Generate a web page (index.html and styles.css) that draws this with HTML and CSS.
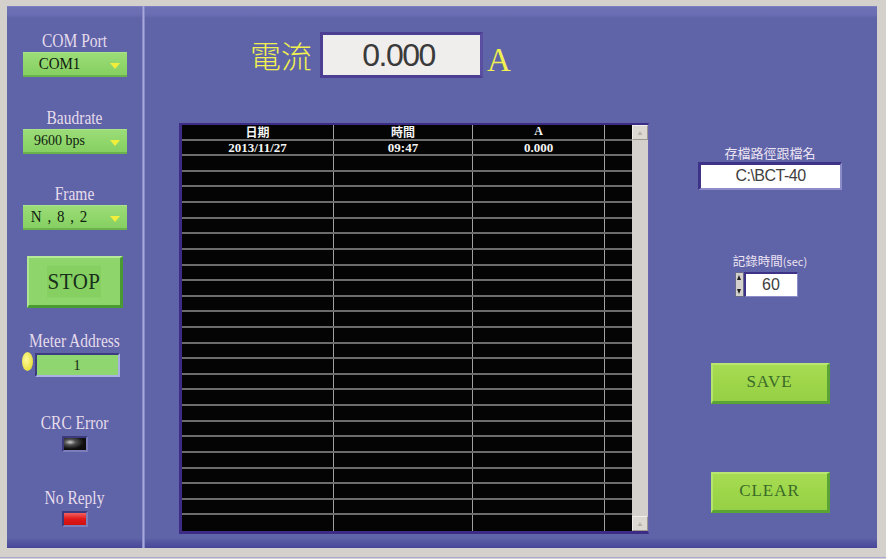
FILE: index.html
```html
<!DOCTYPE html>
<html>
<head>
<meta charset="utf-8">
<link rel="stylesheet" href="styles.css">
</head>
<body>
<div class="app">
  <div class="left panel">
    <div class="lbl l-com">COM Port</div>
    <div class="drop"><span class="drop-text">COM1</span><span class="arrow"></span></div>
    <div class="lbl l-baud">Baudrate</div>
    <div class="drop"><span class="drop-text small">9600 bps</span><span class="arrow"></span></div>
    <div class="lbl l-frame">Frame</div>
    <div class="drop"><span class="drop-text wide">N , 8 , 2</span><span class="arrow"></span></div>
    <div class="stop"><span>STOP</span></div>
    <div class="lbl l-meter">Meter Address</div>
    <div class="meter">
      <div class="knob"></div>
      <div class="meter-field">1</div>
    </div>
    <div class="lbl l-crc">CRC Error</div>
    <div class="led led-off"></div>
    <div class="lbl l-noreply">No Reply</div>
    <div class="led led-red"></div>
  </div>
  <div class="divider"></div>
  <div class="main panel">
    <div class="reading">
      <div class="cur-label">電流</div>
      <div class="cur-box">0.000</div>
      <div class="cur-unit">A</div>
    </div>
    <div class="content">
      <div class="table">
        <div class="grid">
          <div class="row head"><div class="c">日期</div><div class="c">時間</div><div class="c">A</div><div class="c"></div></div>
          <div class="row"><div class="c">2013/11/27</div><div class="c">09:47</div><div class="c">0.000</div><div class="c"></div></div>
          <div class="row"><div class="c"></div><div class="c"></div><div class="c"></div><div class="c"></div></div>
          <div class="row"><div class="c"></div><div class="c"></div><div class="c"></div><div class="c"></div></div>
          <div class="row"><div class="c"></div><div class="c"></div><div class="c"></div><div class="c"></div></div>
          <div class="row"><div class="c"></div><div class="c"></div><div class="c"></div><div class="c"></div></div>
          <div class="row"><div class="c"></div><div class="c"></div><div class="c"></div><div class="c"></div></div>
          <div class="row"><div class="c"></div><div class="c"></div><div class="c"></div><div class="c"></div></div>
          <div class="row"><div class="c"></div><div class="c"></div><div class="c"></div><div class="c"></div></div>
          <div class="row"><div class="c"></div><div class="c"></div><div class="c"></div><div class="c"></div></div>
          <div class="row"><div class="c"></div><div class="c"></div><div class="c"></div><div class="c"></div></div>
          <div class="row"><div class="c"></div><div class="c"></div><div class="c"></div><div class="c"></div></div>
          <div class="row"><div class="c"></div><div class="c"></div><div class="c"></div><div class="c"></div></div>
          <div class="row"><div class="c"></div><div class="c"></div><div class="c"></div><div class="c"></div></div>
          <div class="row"><div class="c"></div><div class="c"></div><div class="c"></div><div class="c"></div></div>
          <div class="row"><div class="c"></div><div class="c"></div><div class="c"></div><div class="c"></div></div>
          <div class="row"><div class="c"></div><div class="c"></div><div class="c"></div><div class="c"></div></div>
          <div class="row"><div class="c"></div><div class="c"></div><div class="c"></div><div class="c"></div></div>
          <div class="row"><div class="c"></div><div class="c"></div><div class="c"></div><div class="c"></div></div>
          <div class="row"><div class="c"></div><div class="c"></div><div class="c"></div><div class="c"></div></div>
          <div class="row"><div class="c"></div><div class="c"></div><div class="c"></div><div class="c"></div></div>
          <div class="row"><div class="c"></div><div class="c"></div><div class="c"></div><div class="c"></div></div>
          <div class="row"><div class="c"></div><div class="c"></div><div class="c"></div><div class="c"></div></div>
          <div class="row"><div class="c"></div><div class="c"></div><div class="c"></div><div class="c"></div></div>
          <div class="row"><div class="c"></div><div class="c"></div><div class="c"></div><div class="c"></div></div>
          <div class="row last"><div class="c"></div><div class="c"></div><div class="c"></div><div class="c"></div></div>
        </div>
        <div class="scroll">
          <div class="sbtn"><svg width="6" height="6" viewBox="0 0 6 6"><path d="M3 1 L5.5 5 L0.5 5 Z" fill="#b8b4a8"/></svg></div>
          <div class="strack"></div>
          <div class="sbtn"><svg width="6" height="6" viewBox="0 0 6 6"><path d="M3 1 L5.5 5 L0.5 5 Z" fill="#b8b4a8"/></svg></div>
        </div>
      </div>
      <div class="side">
        <div class="side-lbl l-path">存檔路徑跟檔名</div>
        <div class="path-field">C:\BCT-40</div>
        <div class="side-lbl l-rec">記錄時間<span class="sec">(sec)</span></div>
        <div class="num">
          <div class="spin"><span class="tri up"></span><span class="tri down"></span></div>
          <div class="num-field">60</div>
        </div>
        <div class="gbtn save">SAVE</div>
        <div class="gbtn clear">CLEAR</div>
      </div>
    </div>
  </div>
</div>
<div class="bottom-line"></div>
</body>
</html>
```

FILE: styles.css
```css
html, body {
  margin: 0;
  padding: 0;
}
body {
  width: 886px;
  height: 559px;
  background: #d4d0cc;
  overflow: hidden;
  font-family: "Liberation Serif", "Times New Roman", serif;
}
.app {
  display: flex;
  padding: 6px 9px 0 7px;
  height: 542px;
}
.panel {
  background: linear-gradient(to bottom, #8a8ccc 0px, #6e71b4 1px, #6a6db2 9px, #5f63a8 12px, #5f63a8 532px, #5456a0 536px, #48469a 542px);
  height: 542px;
  box-sizing: border-box;
}
.left {
  width: 135px;
  display: flex;
  flex-direction: column;
  align-items: center;
}
.divider {
  width: 3px;
  height: 542px;
  background: linear-gradient(to right, #7c7ec0, #a8a8dc, #7678bc);
}
.main {
  flex: 1;
  display: flex;
  flex-direction: column;
  padding: 26px 0 0 34px;
}

/* left panel */
.lbl {
  color: #e6dcec;
  font-size: 15.5px;
  line-height: 16px;
  height: 16px;
  white-space: nowrap;
  transform: scaleY(1.15);
}
.l-com { margin-top: 27px; }
.l-baud { margin-top: 33px; }
.l-frame { margin-top: 32px; }
.l-meter { margin-top: 25px; }
.l-crc { margin-top: 38px; }
.l-noreply { margin-top: 38px; }

.drop {
  margin-top: 3px;
  margin-left: 1px;
  width: 104px;
  height: 25px;
  box-sizing: border-box;
  background: linear-gradient(to bottom, #9cdc78, #8ed56a 60%, #86cf62);
  border-top: 1px solid #a8e48a;
  border-bottom: 2px solid #6ab24c;
  display: flex;
  align-items: center;
  position: relative;
}
.drop-text {
  flex: 1;
  text-align: center;
  font-size: 15px;
  color: #102010;
  padding-right: 14px;
  transform: scaleY(1.1);
}
.drop-text.small { font-size: 14px; }
.drop-text.wide { font-size: 15px; letter-spacing: 1px; }
.arrow {
  width: 0;
  height: 0;
  border-left: 5px solid transparent;
  border-right: 5px solid transparent;
  border-top: 6px solid #f2ee3a;
  margin-right: 7px;
  margin-top: 3px;
}

.stop {
  margin-top: 26px;
  width: 96px;
  height: 52px;
  box-sizing: border-box;
  background: #8ed66c;
  border-top: 2px solid #b6ea98;
  border-left: 2px solid #b0e692;
  border-right: 3px solid #4a9a34;
  border-bottom: 3px solid #4a9a34;
  display: flex;
  align-items: center;
  justify-content: center;
}
.stop span {
  font-size: 21px;
  color: #18301a;
  background: #86d062;
  padding: 2px 1px;
  letter-spacing: 0.5px;
  transform: scaleY(1.1);
}

.meter {
  margin-top: 4px;
  display: flex;
  align-items: flex-start;
  margin-left: -8px;
}
.knob {
  width: 11px;
  height: 19px;
  border-radius: 50%;
  background: radial-gradient(ellipse at 40% 40%, #fffb9a, #e8e040 70%, #c8c020);
  margin-top: -1px;
  margin-right: 2px;
}
.meter-field {
  width: 85px;
  height: 24px;
  box-sizing: border-box;
  background: #90d670;
  border-top: 2px solid #3e3c80;
  border-left: 2px solid #3e3c80;
  border-right: 2px solid #a8b0e4;
  border-bottom: 2px solid #a8b0e4;
  text-align: center;
  font-size: 15px;
  line-height: 20px;
  color: #1c2c1c;
}

.led {
  margin-top: 5px;
  width: 26px;
  height: 16px;
  box-sizing: border-box;
  border: 2px solid #3c3a7c;
  border-right-color: #7c7ebc;
  border-bottom-color: #7c7ebc;
}
.led-off {
  background: radial-gradient(ellipse at 28% 35%, #d0d0d0 0, #505050 25%, #101010 60%, #080808);
}
.led-red {
  background: linear-gradient(to bottom, #f26060, #e01818 50%, #d01010);
}

/* main */
.reading {
  display: flex;
  align-items: center;
  margin-left: 71px;
  height: 46px;
}
.cur-label {
  font-family: "Noto Sans CJK TC", "Noto Sans CJK SC", sans-serif;
  color: #f0f050;
  font-size: 31px;
  font-weight: 300;
  line-height: 46px;
  margin-right: 8px;
  margin-top: 0px;
}
.cur-box {
  width: 163px;
  height: 46px;
  box-sizing: border-box;
  border: 3px solid #4c3e92;
  border-right-color: #5a4ea0;
  background: #f0eeec;
  text-align: center;
  font-family: "Liberation Sans", Arial, sans-serif;
  font-size: 32px;
  letter-spacing: -1.5px;
  line-height: 40px;
  color: #3a3a3a;
  padding-right: 6px;
}
.cur-unit {
  font-size: 33px;
  color: #f0f050;
  margin-left: 4px;
  margin-top: 10px;
  line-height: 40px;
}

.content {
  display: flex;
  margin-top: 45px;
}
.table {
  width: 470px;
  height: 411px;
  box-sizing: border-box;
  border-top: 2px solid #3c2c86;
  border-left: 3px solid #3c2c86;
  border-bottom: 3px solid #3c2c86;
  border-right: 1px solid #6a64b0;
  background: #040404;
  display: flex;
}
.grid {
  width: 451px;
  display: grid;
  grid-template-rows: repeat(26, 1fr);
}
.row {
  display: grid;
  grid-template-columns: 152px 139px 132px 1fr;
  border-bottom: 2px solid #6c6c6c;
  min-height: 0;
}
.row.last { border-bottom: none; }
.c {
  border-right: 1px solid #a0a0a0;
  color: #f4f4f4;
  font-weight: bold;
  font-size: 13px;
  text-align: center;
  line-height: 13px;
  white-space: nowrap;
}
.c:last-child { border-right: none; }
.head .c {
  font-family: "Noto Sans CJK TC", "Noto Sans CJK SC", sans-serif;
  font-size: 12px;
  line-height: 13px;
}
.head .c:nth-child(3) {
  font-family: "Liberation Serif", serif;
}
.scroll {
  width: 16px;
  background: #d4d0cc;
  display: flex;
  flex-direction: column;
}
.sbtn {
  height: 15px;
  box-sizing: border-box;
  border-top: 1px solid #f0eeea;
  border-left: 1px solid #f0eeea;
  border-right: 1px solid #9c9890;
  border-bottom: 1px solid #9c9890;
  display: flex;
  align-items: center;
  justify-content: center;
  background: #dcd8d2;
}
.strack { flex: 1; }

.side {
  margin-left: 49px;
  width: 144px;
  display: flex;
  flex-direction: column;
  align-items: center;
}
.side-lbl {
  font-family: "Noto Sans CJK TC", "Noto Sans CJK SC", sans-serif;
  color: #ece4f2;
  font-size: 13px;
  line-height: 16px;
  height: 16px;
  white-space: nowrap;
}
.l-path { margin-top: 22px; }
.path-field {
  margin-top: 1px;
  width: 144px;
  height: 28px;
  box-sizing: border-box;
  background: #ffffff;
  border-top: 3px solid #3e3286;
  border-left: 3px solid #3e3286;
  border-right: 2px solid #8c8cc8;
  border-bottom: 2px solid #8c8cc8;
  text-align: center;
  font-family: "Liberation Sans", Arial, sans-serif;
  font-size: 16px;
  letter-spacing: -0.5px;
  line-height: 22px;
  color: #404040;
}
.l-rec { margin-top: 63px; font-size: 12.5px; }
.sec { font-size: 11px; }
.num {
  margin-top: 3px;
  display: flex;
  height: 25px;
  margin-left: -8px;
}
.spin {
  width: 9px;
  height: 25px;
  box-sizing: border-box;
  background: #d4d0cc;
  border: 1px solid #6a6a8a;
  display: flex;
  flex-direction: column;
  align-items: center;
  justify-content: space-between;
  padding: 2px 0;
}
.tri {
  width: 0;
  height: 0;
  border-left: 2.5px solid transparent;
  border-right: 2.5px solid transparent;
}
.tri.up { border-bottom: 5px solid #202020; }
.tri.down { border-top: 5px solid #202020; }
.num-field {
  width: 54px;
  height: 25px;
  box-sizing: border-box;
  background: #ffffff;
  border-top: 2px solid #3e3286;
  border-left: 2px solid #3e3286;
  border-right: 1px solid #8c8cc8;
  border-bottom: 1px solid #8c8cc8;
  text-align: center;
  font-family: "Liberation Sans", Arial, sans-serif;
  font-size: 16px;
  line-height: 22px;
  color: #404040;
}
.gbtn {
  width: 119px;
  height: 41px;
  box-sizing: border-box;
  background: linear-gradient(to bottom, #a6dc52, #9ed64a 50%, #96d044);
  border-top: 2px solid #b8e670;
  border-left: 2px solid #b4e46c;
  border-right: 3px solid #5aa436;
  border-bottom: 3px solid #5aa436;
  color: #3a6a28;
  font-size: 17px;
  letter-spacing: 1px;
  display: flex;
  align-items: center;
  justify-content: center;
  padding-bottom: 2px;
}
.save { margin-top: 66px; }
.clear { margin-top: 68px; }

.bottom-line {
  margin-top: 9px;
  height: 1px;
  background: #a8a8d4;
}
```
